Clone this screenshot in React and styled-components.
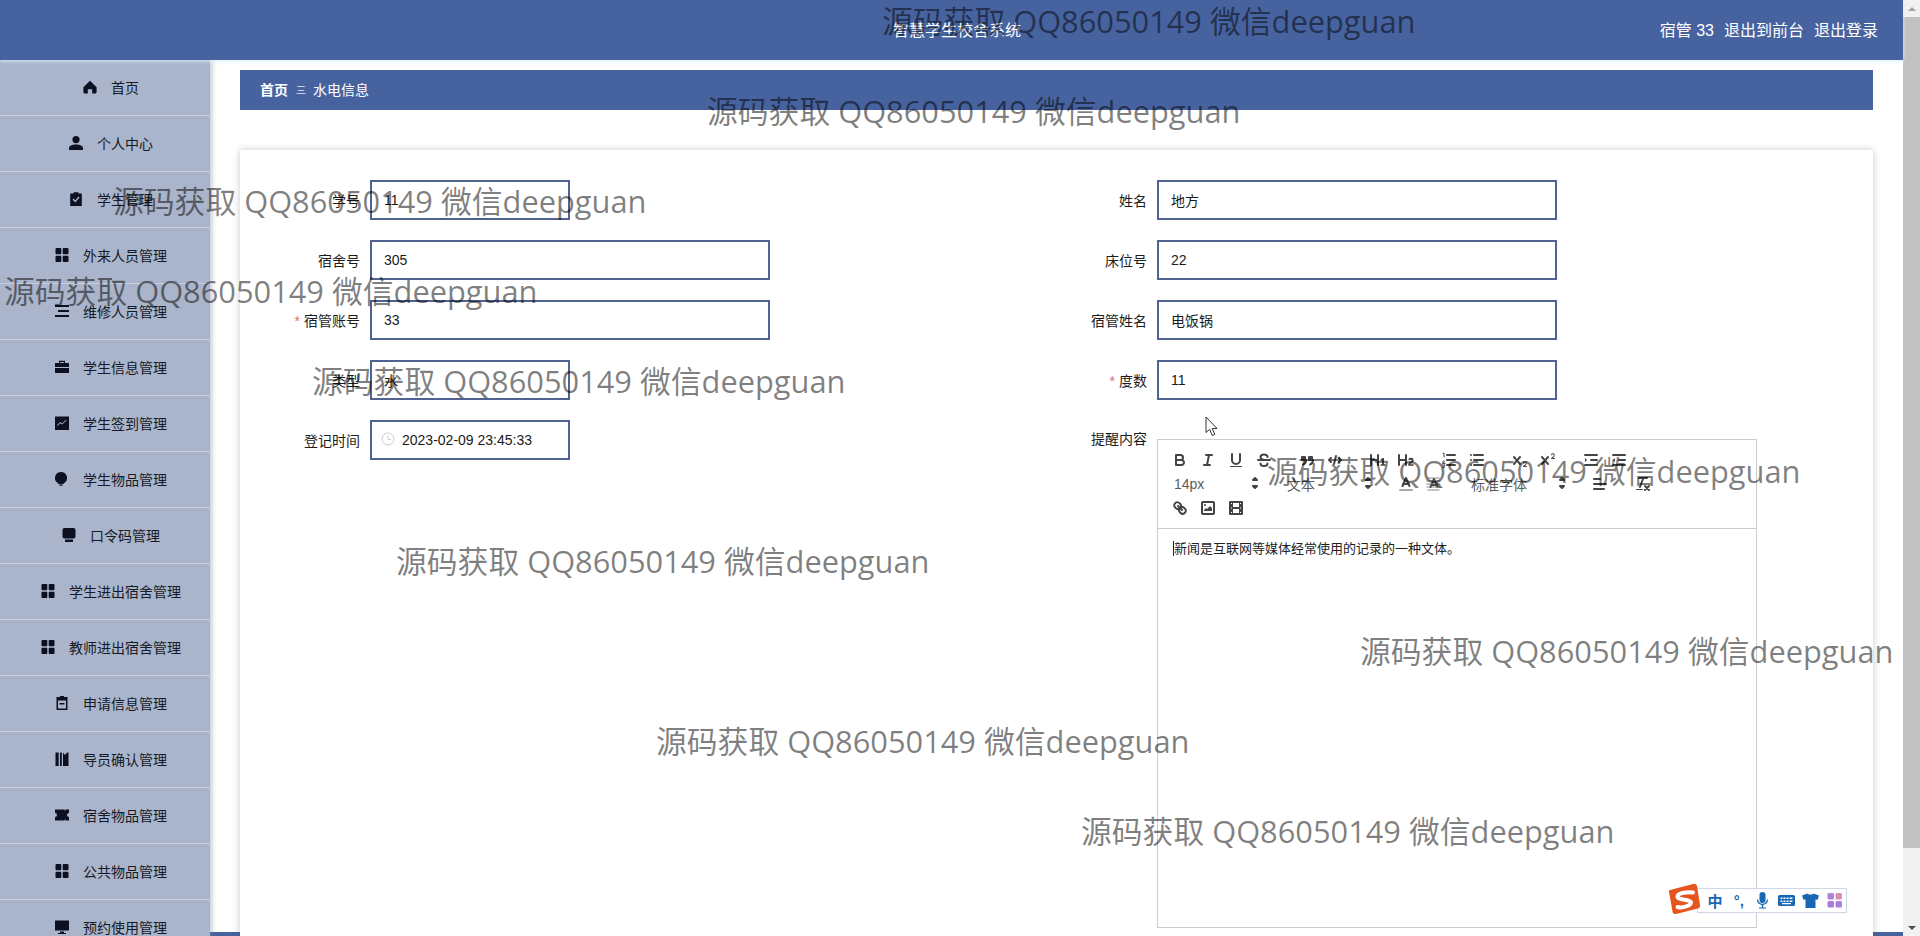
import React from "react";
import styled, { createGlobalStyle } from "styled-components";

const GlobalStyle = createGlobalStyle`
  html, body {
    margin: 0;
    padding: 0;
    height: 100%;
    overflow: hidden;
    background: #fff;
  }
  * {
    box-sizing: border-box;
  }
`;

const BLUE = "#47639f";
const SIDE = "#aab5cb";
const FONT = `"Liberation Sans", "Noto Sans CJK SC", sans-serif`;

const Shell = styled.div`
  position: relative;
  display: flex;
  width: 1920px;
  height: 936px;
  overflow: hidden;
  font-family: ${FONT};
`;

const Page = styled.div`
  display: flex;
  flex-direction: column;
  width: 1903px;
  height: 936px;
`;

const Header = styled.header`
  position: relative;
  z-index: 2;
  display: grid;
  grid-template-columns: 1fr auto 1fr;
  align-items: center;
  flex: 0 0 60px;
  padding: 0 25px 2px 36px;
  background: ${BLUE};
  color: #fff;
  font-size: 16px;
  box-shadow: 0 1px 4px #d4effa;
`;

const SystemName = styled.div`
  grid-column: 2;
`;

const UserBox = styled.div`
  grid-column: 3;
  display: flex;
  justify-content: flex-end;
  gap: 10px;
`;

const Body = styled.div`
  display: flex;
  flex: 1;
  min-height: 0;
`;

const Sidebar = styled.nav`
  position: relative;
  z-index: 1;
  flex: 0 0 210px;
  background: ${SIDE};
  box-shadow: 2px 0 5px rgba(120, 130, 160, 0.45);
`;

const MenuItem = styled.div`
  display: flex;
  align-items: center;
  justify-content: center;
  gap: 14px;
  height: 56px;
  padding: 0 0 2px 12px;
  border-bottom: 1px solid #c6cee0;
  font-size: 14px;
  color: #151a26;

  svg {
    flex: 0 0 14px;
    width: 14px;
    height: 14px;
    fill: #0c1020;
  }
`;

const Main = styled.main`
  flex: 1;
  padding: 10px 30px 0;
  overflow: hidden;
  background: linear-gradient(#fff 872px, ${BLUE} 872px);
`;

const Breadcrumb = styled.div`
  display: flex;
  align-items: center;
  height: 40px;
  padding: 0 0 2px 20px;
  background: ${BLUE};
  color: #fff;
  font-size: 14px;
`;

const CrumbHome = styled.span`
  font-weight: 700;
`;

const CrumbSep = styled.span`
  margin: 0 7px 0 8px;
  font-size: 10px;
  color: #dfe5f2;
`;

const Card = styled.section`
  display: flex;
  height: 830px;
  margin-top: 40px;
  padding-top: 30px;
  background: #fff;
  box-shadow: 0 0 7px rgba(70, 70, 80, 0.3);
`;

const Column = styled.div`
  display: flex;
  flex-direction: column;
  gap: 20px;
  width: ${(p) => p.$width}px;
`;

const Row = styled.div`
  display: flex;
  align-items: ${(p) => (p.$top ? "flex-start" : "center")};
  gap: 10px;
`;

const Label = styled.label`
  flex: 0 0 120px;
  text-align: right;
  font-size: 14px;
  line-height: ${(p) => (p.$tall ? "38px" : "normal")};
  color: #1c1c1c;
`;

const Star = styled.span`
  margin-right: 4px;
  color: #e06a78;
`;

const Input = styled.input`
  width: ${(p) => p.$width}px;
  height: 40px;
  padding: 0 12px;
  border: 2px solid #4f6291;
  background: transparent;
  outline: none;
  font-family: ${FONT};
  font-size: 14px;
  color: #1a1a1a;
`;

const DateBox = styled.div`
  display: flex;
  align-items: center;
  gap: 7px;
  width: 200px;
  height: 40px;
  padding-left: 9px;
  border: 2px solid #4f6291;
  font-size: 14px;
  color: #1a1a1a;

  svg {
    width: 14px;
    height: 14px;
    margin-top: -3px;
    fill: none;
    stroke: #c9ccd4;
  }
`;

const Editor = styled.div`
  width: 600px;
  height: 489px;
  margin-top: 19px;
  border: 1px solid #ccc;
`;

const Toolbar = styled.div`
  height: 89px;
  padding: 8px;
  border-bottom: 1px solid #ccc;
`;

const ToolRow = styled.div`
  display: flex;
  height: 24px;
`;

const ToolGroup = styled.div`
  display: flex;
  margin-right: 15px;
`;

const ToolButton = styled.span`
  display: block;
  width: 28px;
  height: 24px;
  padding: 3px 5px;

  svg {
    display: block;
    width: 18px;
    height: 18px;
    fill: none;
    stroke: #444;
    stroke-width: 2;
    stroke-linecap: round;
    stroke-linejoin: round;
  }

  .f {
    fill: #444;
    stroke: none;
  }
`;

const Picker = styled.div`
  display: flex;
  align-items: center;
  justify-content: space-between;
  width: ${(p) => p.$width}px;
  height: 24px;
  padding-left: 8px;
  font-size: 14px;
  color: #5c5c5c;

  svg {
    width: 18px;
    height: 18px;
    fill: none;
    stroke: #444;
    stroke-width: 2;
    stroke-linejoin: round;
  }
`;

const EditorBody = styled.div`
  padding: 10px 15px;
  font-size: 13px;
  line-height: 19px;
  color: #222;
`;

const Caret = styled.span`
  border-left: 1px solid #222;
`;

const Scrollbar = styled.div`
  display: flex;
  flex-direction: column;
  align-items: center;
  width: 17px;
  height: 936px;
  background: #f1f1f1;
`;

const ScrollArrow = styled.div`
  flex: 0 0 17px;
  display: flex;
  align-items: center;
  justify-content: center;
  margin-top: ${(p) => (p.$last ? "auto" : "0")};

  &::after {
    content: "";
    border-left: 4px solid transparent;
    border-right: 4px solid transparent;
    border-${(p) => (p.$last ? "top" : "bottom")}: 4px solid ${(p) => (p.$last ? "#505050" : "#a3a3a3")};
  }
`;

const ScrollThumb = styled.div`
  flex: 0 0 831px;
  width: 100%;
  background: #c1c1c1;
`;

const Watermark = styled.div`
  position: absolute;
  z-index: 5;
  left: ${(p) => p.$left}px;
  top: ${(p) => p.$top}px;
  height: 44px;
  line-height: 44px;
  white-space: nowrap;
  font-family: "Open Sans", "Noto Sans CJK SC", sans-serif;
  font-size: 30.8px;
  color: rgba(0, 0, 0, 0.5);
  pointer-events: none;
`;

const Pointer = styled.svg`
  position: absolute;
  z-index: 6;
  left: 1205px;
  top: 416px;
  width: 14px;
  height: 21px;
`;

const ImeLogo = styled.svg`
  position: absolute;
  z-index: 8;
  left: 1668px;
  top: 883px;
  width: 33px;
  height: 32px;
`;

const ImeBar = styled.div`
  position: absolute;
  z-index: 7;
  left: 1697px;
  top: 888px;
  display: flex;
  align-items: center;
  width: 150px;
  height: 25px;
  padding-left: 5px;
  background: #fff;
  border: 1px solid #cdd8e4;
  color: #1767b4;
`;

const ImeItem = styled.span`
  display: flex;
  align-items: center;
  justify-content: center;
  width: 24px;
  height: 23px;
  font-size: 15px;
  font-weight: 700;

  svg {
    width: 17px;
    height: 17px;
    fill: #1767b4;
  }
`;

const icons = {
  home: <path d="M7 .8 13.6 7.2V12a1.4 1.4 0 0 1-1.4 1.4H9.2V9.2H4.8v4.2H1.8A1.4 1.4 0 0 1 .4 12V7.2Z" />,
  user: <path d="M7 0a3.6 3.6 0 1 1 0 7.2A3.6 3.6 0 0 1 7 0ZM0 12.2C0 9.6 3 8.4 7 8.4s7 1.2 7 3.8V14H0Z" />,
  check: <path fillRule="evenodd" d="M4.6 1.4V.2h4.8v1.2h3.4V14H1.2V1.4ZM3.6 7.6 6.2 10.4 10.6 5.4 9.6 4.6 6.2 8.4 4.6 6.6Z" />,
  grid: <path d="M.5 1a1 1 0 0 1 1-1h3.8a1 1 0 0 1 1 1v4.2a1 1 0 0 1-1 1H1.5a1 1 0 0 1-1-1ZM7.7 1a1 1 0 0 1 1-1h3.8a1 1 0 0 1 1 1v4.2a1 1 0 0 1-1 1H8.7a1 1 0 0 1-1-1ZM.5 8.8a1 1 0 0 1 1-1h3.8a1 1 0 0 1 1 1V13a1 1 0 0 1-1 1H1.5a1 1 0 0 1-1-1ZM7.7 8.8a1 1 0 0 1 1-1h3.8a1 1 0 0 1 1 1V13a1 1 0 0 1-1 1H8.7a1 1 0 0 1-1-1Z" />,
  menu: <path d="M0 1h14v2H0ZM3 6h11v2H3ZM0 11h14v2H0Z" />,
  case: <path fillRule="evenodd" d="M4 3V.8h6V3h4v4H0V3Zm1.2 0h3.6V2H5.2ZM0 8h14v5H0Z" />,
  chart: <path fillRule="evenodd" d="M0 .5h14v13.5H0ZM2.4 10 5.2 7.2 7 8.6 11.5 4.4 11 3.8 7 7.4 5.2 6 2 9.2Z" />,
  bulb: <path d="M6 0a6 6 0 0 1 3.600 10.800L7.500 12.600H4.500L2.400 10.800A6 6 0 0 1 6 0ZM4.500 13.200h3V14h-3Z" />,
  shop: <path d="M2.500 0h9a2 2 0 0 1 2 2v6.500a2 2 0 0 1-2 2h-9a2 2 0 0 1-2-2V2a2 2 0 0 1 2-2ZM3 11.500h8V14H3Z" />,
  clip: <path fillRule="evenodd" d="M5 1V0h4v1h3.500v13h-11V1ZM3 4.500V12.500H11V4.500ZM4.500 7h5v1.500h-5Z" />,
  tag: <path d="M.5.500h3.200v13.500H.5ZM5 .5h1.800v13.500H5ZM8 .5l2 2.500 2-2.500h1.500v13.500H8Z" />,
  ticket: <path d="M0 1.500h9.500l.5 1.800.5-1.800H14v3.500a2 2 0 0 0 0 4v3.500h-3.500l-.5-1.800-.5 1.800H0V9a2 2 0 0 0 0-4Z" />,
  screen: <path d="M0 .5h14v10H0ZM5 11.500h4V13h2v1H3v-1h2Z" />,
};

const menu = [
  ["首页", "home"],
  ["个人中心", "user"],
  ["学生管理", "check"],
  ["外来人员管理", "grid"],
  ["维修人员管理", "menu"],
  ["学生信息管理", "case"],
  ["学生签到管理", "chart"],
  ["学生物品管理", "bulb"],
  ["口令码管理", "shop"],
  ["学生进出宿舍管理", "grid"],
  ["教师进出宿舍管理", "grid"],
  ["申请信息管理", "clip"],
  ["导员确认管理", "tag"],
  ["宿舍物品管理", "ticket"],
  ["公共物品管理", "grid"],
  ["预约使用管理", "screen"],
];

const marks = [882, 707, 113, 4, 312, 1267, 396, 1360, 656, 1081];

const Tool = ({ children }) => (
  <ToolButton>
    <svg viewBox="0 0 18 18">{children}</svg>
  </ToolButton>
);

const PickArrow = () => (
  <svg viewBox="0 0 18 18">
    <polygon points="7 11 9 13 11 11 7 11" />
    <polygon points="7 5 9 3 11 5 7 5" />
  </svg>
);

const App = () => {
  return (
    <Shell>
      <GlobalStyle />
      <Page>
        <Header>
          <SystemName>智慧学生校舍系统</SystemName>
          <UserBox>
            <span>宿管 33</span>
            <span>退出到前台</span>
            <span>退出登录</span>
          </UserBox>
        </Header>
        <Body>
          <Sidebar>
            {menu.map(([name, icon]) => (
              <MenuItem key={name}>
                <svg viewBox="0 0 14 14">{icons[icon]}</svg>
                <span>{name}</span>
              </MenuItem>
            ))}
          </Sidebar>
          <Main>
            <Breadcrumb>
              <CrumbHome>首页</CrumbHome>
              <CrumbSep>三</CrumbSep>
              <span>水电信息</span>
            </Breadcrumb>
            <Card>
              <Column $width={787}>
                <Row>
                  <Label>学号</Label>
                  <Input $width={200} readOnly value="11" />
                </Row>
                <Row>
                  <Label>宿舍号</Label>
                  <Input $width={400} readOnly value="305" />
                </Row>
                <Row>
                  <Label>
                    <Star>*</Star>宿管账号
                  </Label>
                  <Input $width={400} readOnly value="33" />
                </Row>
                <Row>
                  <Label>类型</Label>
                  <Input $width={200} readOnly value="水" />
                </Row>
                <Row>
                  <Label>登记时间</Label>
                  <DateBox>
                    <svg viewBox="0 0 14 14">
                      <circle cx="7" cy="7" r="6" />
                      <path d="M7 3.500V7.500H10" />
                    </svg>
                    2023-02-09 23:45:33
                  </DateBox>
                </Row>
              </Column>
              <Column $width={846}>
                <Row>
                  <Label>姓名</Label>
                  <Input $width={400} readOnly value="地方" />
                </Row>
                <Row>
                  <Label>床位号</Label>
                  <Input $width={400} readOnly value="22" />
                </Row>
                <Row>
                  <Label>宿管姓名</Label>
                  <Input $width={400} readOnly value="电饭锅" />
                </Row>
                <Row>
                  <Label>
                    <Star>*</Star>度数
                  </Label>
                  <Input $width={400} readOnly value="11" />
                </Row>
                <Row $top>
                  <Label $tall>提醒内容</Label>
                  <Editor>
                    <Toolbar>
                      <ToolRow>
                        <ToolGroup>
                          <Tool>
                            <path d="M5,4H9.5A2.5,2.5,0,0,1,12,6.5v0A2.5,2.5,0,0,1,9.5,9H5V4Z" />
                            <path d="M5,9h5.5A2.5,2.5,0,0,1,13,11.5v0A2.5,2.5,0,0,1,10.5,14H5V9Z" />
                          </Tool>
                          <Tool>
                            <path d="M7 4H13M5 14H11M8 14 10 4" />
                          </Tool>
                          <Tool>
                            <path d="M5,3V9a4,4,0,0,0,4,4H9a4,4,0,0,0,4-4V3" />
                            <rect className="f" x="3" y="15" width="12" height="1" rx=".5" />
                          </Tool>
                          <Tool>
                            <path d="M3 9H15" />
                            <path d="M12.500 6C12.500 4.500 11 3.500 9 3.500S5.500 4.500 5.500 6 7 8.500 9 9M5.500 12.500C5.500 14 7 15 9 15S12.500 14 12.500 12.500" />
                          </Tool>
                        </ToolGroup>
                        <ToolGroup>
                          <Tool>
                            <rect className="f" x="3" y="5" width="5" height="5" rx="1" />
                            <rect className="f" x="10" y="5" width="5" height="5" rx="1" />
                            <path d="M8 9C8 11.500 7 13 5 13.500M15 9C15 11.500 14 13 12 13.500" />
                          </Tool>
                          <Tool>
                            <polyline points="5 7 3 9 5 11" />
                            <polyline points="13 7 15 9 13 11" />
                            <path d="M10 5 8 13" />
                          </Tool>
                        </ToolGroup>
                        <ToolGroup>
                          <Tool>
                            <path className="f" d="M10,4V14a1,1,0,0,1-2,0V10H3v4a1,1,0,0,1-2,0V4A1,1,0,0,1,3,4V8H8V4a1,1,0,0,1,2,0Zm6.06787,9.209H14.98975V7.59863a.54085.54085,0,0,0-.605-.60547h-.62744a1.01119,1.01119,0,0,0-.748.29688L11.645,8.56641a.5435.5435,0,0,0-.022.8584l.28613.30762a.53861.53861,0,0,0,.84717.0332l.09912-.08789a1.2137,1.2137,0,0,0,.2417-.35254h.02246s-.01123.30859-.01123.60547V13.209H12.041a.54085.54085,0,0,0-.605.60547v.43945a.54085.54085,0,0,0,.605.60547h4.02686a.54085.54085,0,0,0,.605-.60547v-.43945A.54085.54085,0,0,0,16.06787,13.209Z" />
                          </Tool>
                          <Tool>
                            <path className="f" d="M16.73975,13.81445v.43945a.54085.54085,0,0,1-.605.60547H11.855a.58392.58392,0,0,1-.64893-.60547V14.0127c0-2.90527,3.39941-3.42187,3.39941-4.55469a.77675.77675,0,0,0-.84717-.78125,1.17684,1.17684,0,0,0-.83594.38477c-.2749.26367-.561.374-.85791.13184l-.4292-.34082c-.30811-.24219-.38525-.51758-.1543-.81445a2.97155,2.97155,0,0,1,2.45361-1.17676,2.45393,2.45393,0,0,1,2.68408,2.40918c0,2.45312-3.1792,2.92676-3.27832,3.93848h2.79443A.54085.54085,0,0,1,16.73975,13.81445ZM9,3A.99974.99974,0,0,0,8,4V8H3V4A1,1,0,0,0,1,4V14a1,1,0,0,0,2,0V10H8v4a1,1,0,0,0,2,0V4A.99974.99974,0,0,0,9,3Z" />
                          </Tool>
                        </ToolGroup>
                        <ToolGroup>
                          <Tool>
                            <path d="M7 4H15M7 9H15M7 14H15" />
                            <path style={{ strokeWidth: 1 }} d="M3 2.500 4 2V6M2.500 11C2.500 9.500 5 9.500 4.500 11L2.500 12.500H5M2.500 14H5L3.800 15.500C5.500 15.500 5 17 2.500 16.500" />
                          </Tool>
                          <Tool>
                            <path d="M6 4H15M6 9H15M6 14H15M3 4H3.010M3 9H3.010M3 14H3.010" />
                          </Tool>
                        </ToolGroup>
                        <ToolGroup>
                          <Tool>
                            <path className="f" d="M15.5,15H13.861a3.858,3.858,0,0,0,1.914-2.975,1.8,1.8,0,0,0-1.6-1.751A1.921,1.921,0,0,0,12.021,11.7a0.50013,0.50013,0,1,0,.957.291h0a0.914,0.914,0,0,1,1.053-.725,0.81,0.81,0,0,1,.744.762c0,1.076-1.16971,1.86982-1.93971,2.43082A1.45639,1.45639,0,0,0,12,15.5a0.5,0.5,0,0,0,.5.5h3A0.5,0.5,0,0,0,15.5,15Z" />
                            <path className="f" d="M9.651,5.241a1,1,0,0,0-1.41.108L6,7.964,3.759,5.349a1,1,0,1,0-1.519,1.3L4.683,9.5,2.241,12.35a1,1,0,1,0,1.519,1.3L6,11.036l2.241,2.614a1,1,0,0,0,1.519-1.3L7.317,9.5,9.759,6.651A1,1,0,0,0,9.651,5.241Z" />
                          </Tool>
                          <Tool>
                            <path className="f" d="M15.5,7H13.861a4.015,4.015,0,0,0,1.914-2.975,1.8,1.8,0,0,0-1.6-1.751A1.922,1.922,0,0,0,12.021,3.7a0.5,0.5,0,1,0,.957.291,0.917,0.917,0,0,1,1.053-.725,0.81,0.81,0,0,1,.744.762c0,1.077-1.164,1.925-1.934,2.486A1.423,1.423,0,0,0,12,7.5a0.5,0.5,0,0,0,.5.5h3A0.5,0.5,0,0,0,15.5,7Z" />
                            <path className="f" d="M9.651,5.241a1,1,0,0,0-1.41.108L6,7.964,3.759,5.349a1,1,0,1,0-1.519,1.3L4.683,9.5,2.241,12.35a1,1,0,1,0,1.519,1.3L6,11.036l2.241,2.614a1,1,0,0,0,1.519-1.3L7.317,9.5,9.759,6.651A1,1,0,0,0,9.651,5.241Z" />
                          </Tool>
                        </ToolGroup>
                        <ToolGroup>
                          <Tool>
                            <path d="M3 14H15M3 4H15M9 9H15" />
                            <polygon className="f" points="3 7 3 11 5 9 3 7" />
                          </Tool>
                          <Tool>
                            <path d="M3 14H15M3 4H15M9 9H15" />
                            <polygon className="f" points="5 7 5 11 3 9 5 7" />
                          </Tool>
                        </ToolGroup>
                      </ToolRow>
                      <ToolRow>
                        <ToolGroup>
                          <Picker $width={98}>
                            14px
                            <PickArrow />
                          </Picker>
                        </ToolGroup>
                        <ToolGroup>
                          <Picker $width={98}>
                            文本
                            <PickArrow />
                          </Picker>
                        </ToolGroup>
                        <ToolGroup>
                          <Tool>
                            <path d="M3 15H15" style={{ stroke: "#a9a9a9" }} />
                            <polyline points="5.500 11 9 3 12.500 11" />
                            <path d="M11.630 9H6.380" />
                          </Tool>
                          <Tool>
                            <polyline points="5.500 12 9 4 12.500 12" />
                            <path d="M11.630 10H6.380" />
                            <path style={{ strokeWidth: 1, stroke: "#777", strokeDasharray: "1 1" }} d="M3 3H15M2 6H16M2 9H16M2 12H16M3 15H15" />
                          </Tool>
                        </ToolGroup>
                        <ToolGroup>
                          <Picker $width={108}>
                            标准字体
                            <PickArrow />
                          </Picker>
                        </ToolGroup>
                        <ToolGroup>
                          <Tool>
                            <path d="M3 9H15M3 14H13M3 4H9" />
                          </Tool>
                        </ToolGroup>
                        <ToolGroup>
                          <Tool>
                            <path d="M5 3H13M6 12 9.350 3M11 11 15 15M15 11 11 15" />
                            <rect className="f" x="2" y="14" width="7" height="1" rx=".5" />
                          </Tool>
                        </ToolGroup>
                      </ToolRow>
                      <ToolRow>
                        <ToolGroup>
                          <Tool>
                            <path d="M7 7 11 11" />
                            <path d="M8.900,4.577a3.476,3.476,0,0,1,.36,4.679A3.476,3.476,0,0,1,4.577,8.900C3.185,7.500,2.035,6.400,4.217,4.217S7.500,3.185,8.900,4.577Z" />
                            <path d="M13.423,9.100a3.476,3.476,0,0,0-4.679-.36,3.476,3.476,0,0,0,.36,4.679c1.392,1.392,2.500,2.542,4.679.36S14.815,10.500,13.423,9.100Z" />
                          </Tool>
                          <Tool>
                            <rect x="3" y="3" width="12" height="12" rx="1" />
                            <circle className="f" cx="6" cy="6" r="1" />
                            <polyline className="f" points="5 12 5 11 7 9 8 10 11 7 13 9 13 12 5 12" />
                          </Tool>
                          <Tool>
                            <path className="f" d="M15,2H3A1,1,0,0,0,2,3V15a1,1,0,0,0,1,1H15a1,1,0,0,0,1-1V3A1,1,0,0,0,15,2ZM5,14H4V13H5v1Zm0-4.500H4v-1H5v1ZM5,5H4V4H5V5Zm7,9H6V10h6v4Zm0-6H6V4h6V8Zm2,6H13V13h1v1Zm0-4.500H13v-1h1v1ZM14,5H13V4h1V5Z" />
                          </Tool>
                        </ToolGroup>
                      </ToolRow>
                    </Toolbar>
                    <EditorBody>
                      <Caret />
                      新闻是互联网等媒体经常使用的记录的一种文体。
                    </EditorBody>
                  </Editor>
                </Row>
              </Column>
            </Card>
          </Main>
        </Body>
      </Page>
      <Scrollbar>
        <ScrollArrow />
        <ScrollThumb />
        <ScrollArrow $last />
      </Scrollbar>

      {marks.map((left, i) => (
        <Watermark key={left} $left={left} $top={i * 90 - 1}>
          源码获取 QQ86050149 微信deepguan
        </Watermark>
      ))}

      <Pointer viewBox="0 0 14 21">
        <path d="M1 1V16.500L4.600 13.300 7.200 19.500 9.800 18.400 7.200 12.500H12Z" fill="#fff" stroke="#333" strokeWidth="1" />
      </Pointer>

      <ImeBar>
        <ImeItem>中</ImeItem>
        <ImeItem>°,</ImeItem>
        <ImeItem>
          <svg viewBox="0 0 17 17">
            <rect x="5.500" y="0" width="6" height="11" rx="3" />
            <path d="M3 7.500h1.200a4.300 4.300 0 0 0 8.600 0H14a5.500 5.500 0 0 1-4.800 5.400V15.500H12v1H5v-1h2.800V12.900A5.500 5.500 0 0 1 3 7.500Z" />
          </svg>
        </ImeItem>
        <ImeItem>
          <svg viewBox="0 0 17 17">
            <path fillRule="evenodd" d="M1.500 3h14a1.500 1.500 0 0 1 1.500 1.500v8a1.500 1.500 0 0 1-1.500 1.500h-14A1.500 1.500 0 0 1 0 12.500v-8A1.500 1.500 0 0 1 1.500 3ZM2.500 5.500v1.500h2V5.500Zm3 0v1.500h2V5.500Zm3 0v1.500h2V5.500Zm3 0v1.500h3V5.500ZM2.500 8.500V10h2V8.500Zm3 0V10h2V8.500Zm3 0V10h2V8.500Zm3 0V10h3V8.500ZM4 11v1.200h9V11Z" />
          </svg>
        </ImeItem>
        <ImeItem>
          <svg viewBox="0 0 17 17">
            <path d="M5.500 1.500C6 3 11 3 11.500 1.500L17 3.500 15.500 8 13.500 7.200V16H3.500V7.200L1.500 8 0 3.500Z" />
          </svg>
        </ImeItem>
        <ImeItem>
          <svg viewBox="0 0 17 17">
            <rect x="1.500" y="1" width="6.500" height="6.500" rx="1.500" style={{ fill: "#b183d8" }} />
            <rect x="9.500" y="1" width="6.500" height="6.500" rx="1.500" style={{ fill: "#d98fb4" }} />
            <rect x="1.500" y="9" width="6.500" height="6.500" rx="1.500" style={{ fill: "#a67ddb" }} />
            <rect x="9.500" y="9" width="6.500" height="6.500" rx="1.500" style={{ fill: "#a77fdc" }} />
          </svg>
        </ImeItem>
      </ImeBar>
      <ImeLogo viewBox="0 0 33 32">
        <path d="M2 7 25 1C27 .5 28.500 1.500 29 3L32 22C32.300 24 31.500 25 30 25.500L8 31C6.500 31.300 5 30.500 4.600 29L1 9C.7 8 1 7.300 2 7Z" fill="#e7551f" />
        <path d="M25 9.500C19 8.500 10 10 9.500 13.500S23 16.500 23 19.500 15 25.500 9.500 24" fill="none" stroke="#fff" strokeWidth="4" strokeLinecap="round" />
      </ImeLogo>
    </Shell>
  );
};

export default App;
